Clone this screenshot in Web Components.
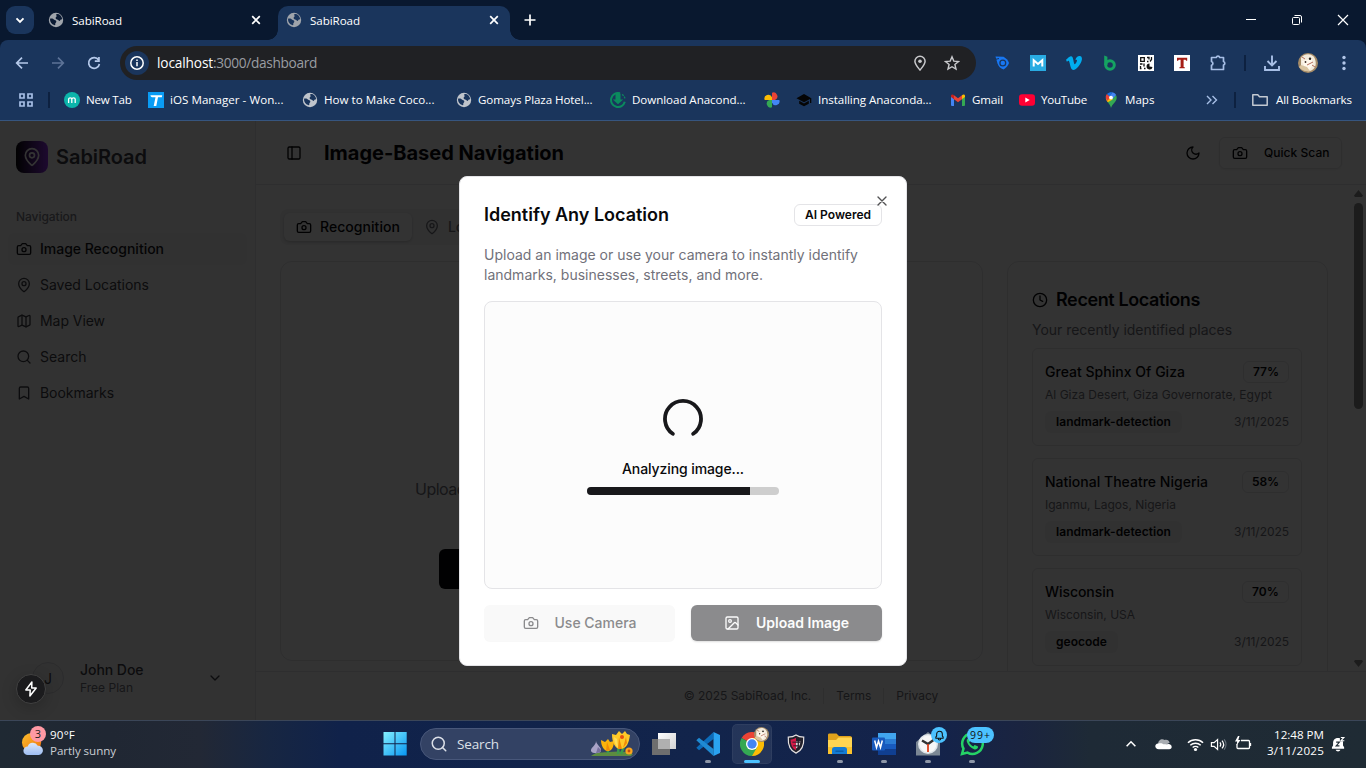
<!DOCTYPE html>
<html lang="en">
<head>
<meta charset="utf-8">
<title>SabiRoad</title>
<style>
html,body{margin:0;height:100%;overflow:hidden;background:#09182f}
body{font-family:"Open Sans","Noto Sans",sans-serif}
</style>
</head>
<body>
<desktop-screen></desktop-screen>
<script>
const L = 'fill="none" stroke="currentColor" stroke-width="2" stroke-linecap="round" stroke-linejoin="round"';
/* name: [viewBox, markup] */
const ICONS = {
  camera: ['0 0 24 24', `<g ${L}><path d="M14.5 4h-5L7 7H4a2 2 0 0 0-2 2v9a2 2 0 0 0 2 2h16a2 2 0 0 0 2-2V9a2 2 0 0 0-2-2h-3l-2.5-3z"/><circle cx="12" cy="13" r="3"/></g>`],
  pin: ['0 0 24 24', `<g ${L}><path d="M20 10c0 4.993-5.539 10.193-7.399 11.799a1 1 0 0 1-1.202 0C9.539 20.193 4 14.993 4 10a8 8 0 0 1 16 0"/><circle cx="12" cy="10" r="3"/></g>`],
  map: ['0 0 24 24', `<g ${L}><path d="M14.106 5.553a2 2 0 0 0 1.788 0l3.659-1.83A1 1 0 0 1 21 4.619v12.764a1 1 0 0 1-.553.894l-4.553 2.277a2 2 0 0 1-1.788 0l-4.212-2.106a2 2 0 0 0-1.788 0l-3.659 1.83A1 1 0 0 1 3 19.381V6.618a1 1 0 0 1 .553-.894l4.553-2.277a2 2 0 0 1 1.788 0z"/><path d="M15 5.764v15M9 3.236v15"/></g>`],
  search: ['0 0 24 24', `<g ${L}><circle cx="11" cy="11" r="8"/><path d="m21 21-4.3-4.3"/></g>`],
  bookmark: ['0 0 24 24', `<path ${L} d="m19 21-7-4-7 4V5a2 2 0 0 1 2-2h10a2 2 0 0 1 2 2v16z"/>`],
  panel: ['0 0 24 24', `<g ${L}><rect x="3" y="3" width="18" height="18" rx="2"/><path d="M9 3v18"/></g>`],
  moon: ['0 0 24 24', `<path ${L} d="M12 3a6 6 0 0 0 9 9 9 9 0 1 1-9-9Z"/>`],
  clock: ['0 0 24 24', `<g ${L}><circle cx="12" cy="12" r="10"/><path d="M12 6v6l4 2"/></g>`],
  image: ['0 0 24 24', `<g ${L}><rect x="3" y="3" width="18" height="18" rx="2"/><circle cx="9" cy="9" r="2"/><path d="m21 15-3.086-3.086a2 2 0 0 0-2.828 0L6 21"/></g>`],
  down: ['0 0 24 24', `<path ${L} d="m6 9 6 6 6-6"/>`],
  close: ['0 0 24 24', `<path ${L} d="M18 6 6 18M6 6l12 12"/>`],
  spinner: ['0 0 40 40', `<path fill="none" stroke="#18181b" stroke-width="3.8" stroke-linecap="round" d="M9.800 34.800A18 18 0 1 1 30.200 34.800"/>`],
  bolt: ['0 0 16 16', `<path fill="none" stroke="currentColor" stroke-width="1.5" stroke-linejoin="round" d="M8.9 1 2.8 9h4.4l-.3 6 6.3-8H8.7z"/>`],
  /* browser chrome */
  caret: ['0 0 16 16', `<path d="M4.5 6.3 8 9.8l3.500-3.500" fill="none" stroke="currentColor" stroke-width="1.900"/>`],
  globe: ['0 0 16 16', `<circle cx="8" cy="8" r="7.200" fill="var(--globe,#bfc4cb)"/><path fill="var(--hole)" d="M2 6.800c1.500-.8 3.200-.3 4 .7.700 1 2 .6 2.300 1.700.4 1.300-1.400 1.600-1 3 .1.700-.5 1.100-1.100.9C3.600 12.300 1.800 9.800 2 6.800zM8.300 2.200c.6-.4 1.700-.3 2.500.1 1.800.9 3.100 2.700 3.300 4.700-.8.9-1.500.3-1.900 1.200-.3 1-1.200.9-1.700.1-.6-.9-2.500-.6-2.900-2-.3-1 .9-1 1-2 .1-.8-.7-1.500-.3-2.100z"/>`],
  x: ['0 0 16 16', `<path d="M4.200 4.200l7.600 7.600M11.800 4.200l-7.600 7.600" stroke="currentColor" stroke-width="1.700"/>`],
  plus: ['0 0 16 16', `<path d="M8 2.500v11M2.500 8h11" stroke="currentColor" stroke-width="1.700"/>`],
  min: ['0 0 16 16', `<path d="M3 7.500h10" stroke="currentColor"/>`],
  restore: ['0 0 16 16', `<rect x="3.500" y="5.500" width="7" height="7" rx="1" fill="none" stroke="currentColor"/><path d="M5.500 3.500H11a1.500 1.500 0 0 1 1.500 1.500v5.500" fill="none" stroke="currentColor"/>`],
  wclose: ['0 0 16 16', `<path d="M3 3l10 10M13 3L3 13" stroke="currentColor" stroke-width="1.200"/>`],
  back: ['0 0 16 16', `<path d="M14 8H3M8 2.700 2.700 8 8 13.300" fill="none" stroke="currentColor" stroke-width="1.700"/>`],
  fwd: ['0 0 16 16', `<path d="M2 8h11M8 2.700 13.300 8 8 13.300" fill="none" stroke="currentColor" stroke-width="1.700"/>`],
  reload: ['0 0 16 16', `<path d="M12.600 5A5.400 5.400 0 1 0 13.400 9" fill="none" stroke="currentColor" stroke-width="1.700"/><path d="M13.800 2v5H8.800V5.300h3.300V2z" fill="currentColor"/>`],
  info: ['0 0 16 16', `<circle cx="8" cy="8" r="6.200" fill="none" stroke="currentColor" stroke-width="1.500"/><path d="M8 7v4.300M8 4.500V6" stroke="currentColor" stroke-width="1.500"/>`],
  place: ['0 0 16 16', `<path d="M8 15C5.500 12 2.900 9.400 2.900 6.300a5.100 5.100 0 0 1 10.200 0C13.100 9.400 10.500 12 8 15z" fill="none" stroke="currentColor" stroke-width="1.500"/><circle cx="8" cy="6.200" r="1.800" fill="currentColor"/>`],
  star: ['0 0 16 16', `<path d="M8 1.800l1.800 4.300 4.700.4-3.600 3 1.100 4.600L8 11.700l-4 2.400 1.100-4.600-3.600-3 4.700-.4z" fill="none" stroke="currentColor" stroke-width="1.400"/>`],
  tag: ['0 0 16 16', `<path d="M1.500 1.500l8 .3c2.500 1.300 4.500 3.500 5.500 6.200-1 2.700-3 5-5.500 6.500-3-1-5-3-6-6z" fill="#1877f2"/><circle cx="8.800" cy="8" r="2.900" fill="none" stroke="#1a355c" stroke-width="1.300"/><path d="M1 4.500l4-1" stroke="#1a355c"/>`],
  mext: ['0 0 16 16', `<path fill="#29abe2" d="M0 0h16v16H0z"/><path d="M3.700 11.600V5.300L8 9l4.300-3.700v6.300" fill="none" stroke="#fff" stroke-width="2"/>`],
  vimeo: ['0 0 16 16', `<path fill="#00adef" d="M0 4.700C1.600 3.300 3.300 1.300 4.800 1.200c1.700-.1 2.100 1.500 2.500 3.600.4 2.400.9 4.500 1.500 4.500.7 0 2.200-2.600 2.200-3.700 0-1-.8-1.100-1.700-.7C10.100 2.200 11.700.9 13.700 1c1.700.1 2.400 1.400 2.200 3.400C15.600 8 10.400 15 7.300 15c-2 0-2.400-2.200-3.200-5-.5-1.900-.8-4.300-1.500-4.300-.4 0-1.100.5-1.700 1z"/>`],
  bext: ['0 0 16 16', `<circle cx="8" cy="10" r="4.300" fill="none" stroke="#15a362" stroke-width="3"/><path d="M2.200.4l3.200 1.300V10H2.200z" fill="#15a362"/>`],
  qr: ['0 0 16 16', `<path fill="#fff" d="M0 0h16v16H0z"/><g fill="none" stroke="#111" stroke-width="1.300"><path d="M2.700 2.700h3.600v3.600H2.700zM9 2.500h2v2M13.500 2v2.500l-1.500 2M9 6.500h1.500M2 9h2.500M6 8.500v3M2.500 11v2.500h1M6 13.500h1.500"/></g><path fill="#111" d="M11.500 8.500a3 3 0 1 0 3 3.500l-3-.5z"/>`],
  text: ['0 0 16 16', `<path fill="#fff" d="M0 0h16v16H0z"/><path fill="#a51d15" d="M3 2.800h10.200v3h-1l-.7-1H9.600v7.200l1.200.3v.9H5.400v-.9l1.200-.3V4.800H4.800l-.8 1H3z"/>`],
  puzzle: ['0 0 18 18', `<path d="M2.500 3.500h4.700a1.900 1.900 0 0 1 3.600 0h3.700v4a1.900 1.900 0 0 1 0 3.600v4.400H2.500v-4.200a2 2 0 0 0 0-3.800z" fill="none" stroke="#a7bfe6" stroke-width="1.700" stroke-linejoin="round"/>`],
  download: ['0 0 18 18', `<path d="M9 1.500v9.500M4.500 7 9 11.500 13.500 7M2 12v4h14v-4" fill="none" stroke="#a7bfe6" stroke-width="1.900"/>`],
  avatar: ['0 0 20 20', `<circle cx="10" cy="10" r="10" fill="#a58b67"/><path d="M3 5c3-5 12-5 14 1 2 6 0 10-5 12-4 1-9-2-9-6z" fill="#f3ebdc"/><path d="M4 8l3 7 4 2 4-5-1-6z" fill="#fff8ec"/><path d="M1 14c3 4 7 5 11 4l-3-4-6-2z" fill="#d9c4a0"/><circle cx="12" cy="5.800" r="1.200" fill="#2d251f"/><circle cx="7.500" cy="9" r=".9" fill="#41312b"/><path d="M9 12l6-3M4 4l3 2M14 12l3 2" stroke="#b36e5c" stroke-width="1" fill="none"/>`],
  dots: ['0 0 16 16', `<g fill="#b2c6e8"><circle cx="8" cy="2.500" r="1.700"/><circle cx="8" cy="8" r="1.700"/><circle cx="8" cy="13.500" r="1.700"/></g>`],
  apps: ['0 0 16 16', `<g fill="none" stroke="#a7bfe6" stroke-width="1.700"><path d="M2 2h4v4H2zM10 2h4v4h-4zM2 10h4v4H2zM10 10h4v4h-4z"/></g>`],
  mteal: ['0 0 16 16', `<circle cx="8" cy="8" r="8" fill="#0cb5ab"/><path d="M4.600 11V7.300c0-2 3.200-2 3.200 0V11M7.800 7.300c0-2 3.400-2 3.400 0V11" fill="none" stroke="#fff" stroke-width="1.300"/>`],
  tblue: ['0 0 16 16', `<path fill="#0a9cf5" d="M0 0h16v16H0z"/><path d="M2.500 3.200h11.700l-.4 2H10L8.300 14H5.700l1.800-8.800H4.200C3 5.200 2.500 4 2.500 3.200z" fill="#fff"/>`],
  anaconda: ['0 0 16 16', `<path d="M10 1.300a7 7 0 1 0 4.800 8.500" fill="none" stroke="#0b8a5e" stroke-width="2"/><path d="M5.500 1.500h5v6h2.700L8 12.200 2.800 7.500h2.700z" fill="#0b8a5e"/><path d="M12 2.500c2 1 3 3 3 5" fill="none" stroke="#0b8a5e" stroke-width="1.300" stroke-dasharray="2 1"/>`],
  photos: ['0 0 16 16', `<path fill="#ea4335" d="M8 8V.8a3.700 3.700 0 0 1 3 7.200z"/><path fill="#4285f4" d="M8 8h7.300a3.700 3.700 0 0 1-7.300 2.500z"/><path fill="#34a853" d="M8 8v7.300A3.700 3.700 0 0 1 5.300 8z"/><path fill="#fbbc04" d="M8 8H.7A3.700 3.700 0 0 1 8 5.300z"/>`],
  cap: ['0 0 16 16', `<path fill="#050505" d="M8 2 .5 6.200 8 10.300l6-3.300v4h1.300V6.200zM3.200 8.800v3L8 14.300l4.800-2.500v-3L8 11.500z"/>`],
  gmail: ['0 0 16 16', `<path fill="#4285f4" d="M1 4.500l3 2.300V14H2a1 1 0 0 1-1-1z"/><path fill="#34a853" d="M15 4.500l-3 2.300V14h2a1 1 0 0 0 1-1z"/><path fill="#ea4335" d="M4 3.300l4 3 4-3v3.900l-4 3-4-3z"/><path fill="#c5221f" d="M1 3.900C1 2.300 2.800 1.900 4 3.300v3.900L1 5z"/><path fill="#fbbc04" d="M15 3.900c0-1.600-1.800-2-3-.6v3.900L15 5z"/>`],
  youtube: ['0 0 16 16', `<rect y="2.300" width="16" height="11.500" rx="3" fill="#ff0033"/><path fill="#fff" d="M6.300 5.500v5l4.400-2.500z"/>`],
  gmaps: ['0 0 16 16', `<path fill="#34a853" d="M8 16c-.5-2.500-2-4-3.200-5.700L13 3c1.500 3 .4 5.200-1.200 7.200C10 12.300 8.700 13.500 8 16z"/><path fill="#fbbc04" d="M4.800 10.300C3.600 8.700 2.900 7.500 2.800 6l6-2.800 1 4.300z"/><path fill="#ea4335" d="M2.800 6C2.500 4 3 3 4 2l4 3.300L4 9z"/><path fill="#1a73e8" d="M4 2c1.600-1.700 3.500-2 5.500-1.700L6.600 4.600z"/><path fill="#4285f4" d="M9.500.3c1.600.4 2.900 1.400 3.600 2.800L9 7.500 6.600 4.600z"/><circle cx="8" cy="5.600" r="1.900" fill="#fff"/>`],
  more: ['0 0 16 16', `<path d="M3 4l4 4-4 4M8.500 4l4 4-4 4" fill="none" stroke="#a7bfe6" stroke-width="1.400"/>`],
  folder: ['0 0 16 16', `<path d="M.8 13.200V2.800h5l1.700 1.900h7.700v8.500z" fill="none" stroke="#c3c9d2" stroke-width="1.500" stroke-linejoin="round"/>`],
  /* taskbar */
  weather: ['0 0 24 24', `<defs><linearGradient id="s" x2="1" y2="1"><stop stop-color="#fbc02d"/><stop offset="1" stop-color="#f0700f"/></linearGradient><linearGradient id="c" x2="0" y2="1"><stop stop-color="#dbe7fb"/><stop offset="1" stop-color="#9dbdf2"/></linearGradient></defs><circle cx="11" cy="10" r="10" fill="url(#s)"/><path fill="url(#c)" d="M7 23a4.500 4.500 0 0 1 0-9 5.800 5.800 0 0 1 10.500-.7A4.800 4.800 0 0 1 18.500 23z"/>`],
  start: ['0 0 24 24', `<defs><linearGradient id="w" x2="1" y2="1"><stop stop-color="#84f0ff"/><stop offset="1" stop-color="#0796f2"/></linearGradient></defs><path fill="url(#w)" d="M.5 0h11v11.300H.5zM12.500 0h11.200v11.300H12.500zM.5 12.300h11v11.300H.5zM12.500 12.300h11.200v11.300H12.500z"/>`],
  flowers: ['0 0 44 26', `<path fill="#5d8c40" d="M1 25c6-5 12-3 18-4 8-1 18-1 24 2l-2 2z"/><path d="M18 22l-1-10M28 23l1-12M31 23c2-4 3-8 3-11" stroke="#3b9a4c" stroke-width="2.500" fill="none"/><path fill="#a9a3c7" d="M6 10c1 5 6 6 5 10-1 3-9 3-10 0-.5-4 5-5 5-10z"/><path fill="#776f9e" d="M6 12v10M6 22c3 0 5-1 5-3l-3-3z"/><path fill="#fbb30c" d="M11 9l4 2 3-3 2 3 4-1c0 5-2 10-6 10s-7-5-7-11z"/><path fill="#ffc928" d="M22 3l4 1 3-4 3 3 3-3 2 3 3 1c-1 7-3 14-10 14-5 0-8-7-8-15z"/><path fill="#f08b08" d="M28 18l1-12 3 12zM33 17l3-11 1 6zM16 20l1-9 3 8z"/><path fill="#ffdc58" d="M24 6c0 5 2 9 4 11l-1-9z"/><circle cx="32" cy="6" r="2" fill="#e85010"/><circle cx="39" cy="20" r="3.600" fill="#f9a51e"/><circle cx="39" cy="20" r="1.400" fill="#c84f10"/>`],
  taskview: ['0 0 24 24', `<defs><linearGradient id="t" x2="1" y2="1"><stop stop-color="#fff"/><stop offset="1" stop-color="#d2d2d2"/></linearGradient></defs><path fill="url(#t)" d="M6 1h18v16H6z"/><path fill="#6e6e6e" d="M0 7h18v16H0z"/><path fill="#b0b0b0" d="M6 7h12v10H6z"/>`],
  vscode: ['0 0 24 24', `<path fill="#0c6cba" d="M.3 15.800 17.500 0v7L3 18.300z"/><path fill="#1f8ad2" d="M.3 8.200 3 5.700 17.500 17v7z"/><path fill="#2aa3f1" d="M17.500 0 24 3.100v17.800L17.500 24z"/>`],
  chrome: ['0 0 24 24', `<path fill="#ea4335" d="M12 12 1.600 6A12 12 0 0 1 22.400 6z"/><path fill="#fbbc05" d="M12 12V6h10.400A12 12 0 0 1 12 24z"/><path fill="#34a853" d="M1.600 6A12 12 0 0 0 12 24l5.200-9-5.200-3z"/><circle cx="12" cy="12" r="6" fill="#fff"/><circle cx="12" cy="12" r="4.700" fill="#4285f4"/>`],
  shield: ['0 0 20 22', `<path fill="#23212b" stroke="#e6e3e4" stroke-width="1.300" d="M10 1c3 2 5 2.300 8.500 2.500C19 12 17 18 10 21 3 18 1 12 1.500 3.500 5 3.300 7 3 10 1z"/><path fill="#d51b48" d="M10 4v14C6 16 4 12 4 6c2 0 4-.8 6-2z"/><path fill="#d8d5d9" d="M10 8h5l-1 5-4 3z"/><path d="M10 9h5M10 13h4M12.500 5v12" stroke="#241e29" stroke-width="1.300"/><path d="M6 9h4M7 13h3" stroke="#241e29"/>`],
  files: ['0 0 24 24', `<path fill="#e0a21b" d="M0 3c0-1 .5-1.500 1.500-1.500h7L11 4h11c1 0 2 .8 2 2v6H0z"/><path fill="#ffd552" d="M0 8h8l2.500-2.500H24V22H0z"/><path fill="#fac22d" d="M0 15h24v7H0z"/><path fill="#137bd4" d="M4 22v-4.500C4 16 5 15 6.500 15h10c1.500 0 2.500 1 2.500 2.500V22z"/><path fill="#0b5da8" d="M7.500 18.500h8V20h-8z"/>`],
  word: ['0 0 24 24', `<path fill="#41a5ee" d="M6 1h18v6H6z"/><path fill="#2b7cd3" d="M6 7h18v5H6z"/><path fill="#185abd" d="M6 12h18v5H6z"/><path fill="#103f91" d="M6 17h18v6H6z"/><rect y="5.500" width="13" height="13" rx="1" fill="#185abd"/><path d="M2.700 8.500l1.800 7L6.500 9l2 6.500 1.800-7" fill="none" stroke="#fff" stroke-width="1.500"/>`],
  alarm: ['0 0 24 24', `<path fill="#7b8794" d="M0 10 12 0l12 10v13.500H0z"/><circle cx="12" cy="12" r="10" fill="#dfe5e9"/><circle cx="12" cy="12" r="8.500" fill="#f7f7f7"/><path d="M6 8.500l6 3.500 5.500-4" fill="none" stroke="#333" stroke-width="2.400"/><path d="M12 12v8" stroke="#df421b" stroke-width="1.800"/>`],
  whatsapp: ['0 0 24 24', `<path fill="none" stroke="#25d366" stroke-width="2.500" d="M2 22l1.500-5.400A10.300 10.300 0 1 1 7.500 20.600z"/><path fill="#25d366" d="M8.300 6.200c-1.500.6-2 2.400-1.300 4 1.300 3.200 3.800 5.800 7 7 1.800.6 3.600-.2 4-1.900.1-.6 0-.8-.4-1l-2.400-1.100c-.4-.2-.7 0-1 .3l-.8 1c-2-.8-3.300-2.200-4.200-4l.9-1.200c.2-.3.2-.6.100-.9l-.9-2.100z"/>`],
  bell: ['0 0 16 16', `<path d="M3.500 11.500V10l1-1.500V6.300a3.500 3.500 0 0 1 7 0v2.200l1 1.500v1.500zM6.500 12a1.500 1.500 0 0 0 3 0" fill="none" stroke="#111" stroke-width="1.300" stroke-linejoin="round"/>`],
  up: ['0 0 16 16', `<path d="M3 10.500l5-5 5 5" fill="none" stroke="#fff" stroke-width="1.800"/>`],
  cloud: ['0 0 18 14' , `<path fill="#a9adb2" d="M3.500 7C3 3.500 7 .7 10.200 2.800 12.500 1.700 15 3.200 15.500 5.700L9 9z"/><path fill="#fff" d="M4 12.500c-4.500 0-5-5.700-.8-6C6 5.500 8 6.500 9 7.200l4 .1C18 6 19.500 12.500 15 12.500z"/>`],
  wifi: ['0 0 18 16', `<g fill="none" stroke="#fff" stroke-width="1.500"><path d="M1 6.200a11.500 11.500 0 0 1 16 0M3.500 8.800a8 8 0 0 1 11 0M6 11.300a4.300 4.300 0 0 1 6 0"/></g><circle cx="9" cy="13.300" r="1.700" fill="#fff"/>`],
  sound: ['0 0 18 16', `<g fill="none" stroke="#fff" stroke-width="1.300"><path d="M1.500 6h2.800L8 2.800v10.400L4.300 10H1.500zM10.500 5.800a3.500 3.500 0 0 1 0 4.400M12.700 3.800a6.500 6.500 0 0 1 0 8.400"/><path d="M15 2.500a9 9 0 0 1 0 11" stroke="#66717b"/></g>`],
  battery: ['0 0 18 16', `<path d="M7 4.500h7.500a1 1 0 0 1 1 1v6a1 1 0 0 1-1 1H4a1 1 0 0 1-1-1V8M16.500 7v3" fill="none" stroke="#fff" stroke-width="1.300"/><path fill="#fff" d="M4 0 1 5.500h2.200L2.500 9.500 6.500 4H4.300L5.500 0z"/>`],
  dnd: ['0 0 16 18', `<path fill="#fff" d="M1 13.500V12l1.200-2V7.500C2.200 4 4.500 2 7.500 2c1 0 1.500.2 2 .4v3h3.300V10L14 12v1.500zM5 14.700h5c-.7 2.200-4.300 2.200-5 0z"/><path d="M5.500 6.500h3.500L5.500 10.500H9" fill="none" stroke="#1f2b34" stroke-width="1.200"/><path d="M10.500 1.500h3.200l-3 3.500h3.500" fill="none" stroke="#fff" stroke-width="1.200"/>`]
};

class Base extends HTMLElement {
  constructor() {
    super();
    this.attachShadow({mode: 'open'});
  }
  connectedCallback() {
    if (!this.done) {
      this.done = true;
      this.shadowRoot.innerHTML = `<style>*{box-sizing:border-box}</style>` + this.view();
      this.ready();
    }
  }
  a(n, d = '') { return this.getAttribute(n) ?? d; }
  ready() {}
}
const define = (name, view, ready) => customElements.define(name, class extends Base {
  view() { return view.call(this); }
  ready() { ready && ready.call(this); }
});

define('ui-icon', function () {
  const [vb, body] = ICONS[this.a('name')];
  const w = this.a('size', '16'), h = this.a('h', w);
  return `<style>:host{display:block;flex:none;width:${w}px;height:${h}px}svg{display:block;width:100%;height:100%}</style><svg viewBox="${vb}">${body}</svg>`;
});

/* A single line of text tracked so that it fills the width given in "w". */
define('ui-label', function () {
  return `<style>:host{display:block;flex:none;white-space:nowrap}span{display:inline-block}</style><span><slot></slot></span>`;
}, function () {
  const w = parseFloat(this.a('w', '0'));
  if (!w) return;
  const nat = this.shadowRoot.querySelector('span').getBoundingClientRect().width;
  this.style.letterSpacing = ((w - nat) / this.textContent.length).toFixed(3) + 'px';
  this.style.width = w + 'px';
});

define('browser-tab', function () {
  return `<style>:host{display:flex;align-items:center;height:34px;width:232px;padding:0 8px 6px;position:relative;color:#fff;font-size:11.6px;--hole:#0a1a33;--globe:#9fa4ab;border-radius:10px 10px 0 0}
  :host([active]){background:#1a355c;--hole:#1a355c}
  :host([active])::before,:host([active])::after{content:"";position:absolute;bottom:0;width:10px;height:10px}
  :host([active])::before{left:-10px;background:radial-gradient(circle at 0 0,transparent 9.500px,#1a355c 10px)}
  :host([active])::after{right:-10px;background:radial-gradient(circle at 100% 0,transparent 9.500px,#1a355c 10px)}
  ui-label{margin-left:8px;flex:1}.x{margin-left:auto}</style>
  <ui-icon name="globe"></ui-icon><ui-label w="50">${this.a('label')}</ui-label><ui-icon class="x" name="x"></ui-icon>`;
});

define('tab-strip', function () {
  return `<style>:host{display:flex;height:40px;padding:6px 0 0 6px;background:#09182f;color:#fff;box-sizing:border-box}
  .menu{width:28px;height:28px;border-radius:9px;background:#1a355c;display:grid;place-items:center;margin-right:6px}
  browser-tab{box-sizing:border-box}browser-tab+browser-tab{margin-left:6px}
  .plus{margin:6px 0 0 12px}.win{margin-left:auto;display:flex;gap:30px;padding:6px 15px 0 0}</style>
  <div class="menu"><ui-icon name="caret"></ui-icon></div>
  <browser-tab label="SabiRoad"></browser-tab><browser-tab label="SabiRoad" active></browser-tab>
  <ui-icon class="plus" name="plus"></ui-icon>
  <div class="win"><ui-icon name="min"></ui-icon><ui-icon name="restore"></ui-icon><ui-icon name="wclose"></ui-icon></div>`;
});

define('address-bar', function () {
  return `<style>:host{display:flex;align-items:center;height:46px;padding-left:4px}
  .s{width:36px;display:grid;place-items:center;color:#b5c9ea;flex:none}.dim{color:#5d7397}
  .box{width:856px;height:34px;border-radius:17px;background:#202124;display:flex;align-items:center;padding:0 16px 0 5px;margin:0 8px 0 8px;color:#c9cacd;font-size:13.700px}
  .i{width:24px;height:24px;border-radius:50%;background:#1a355c;color:#fff;display:grid;place-items:center;margin-right:8px}
  .box ui-label{margin-top:-1px}.h{color:#fff}.p{color:#9a9da2}.r{display:flex;gap:16px;margin-left:auto}
  .sep{width:2px;height:16px;background:#0d2140;margin:0 8px}</style>
  <div class="s"><ui-icon name="back"></ui-icon></div><div class="s dim"><ui-icon name="fwd"></ui-icon></div><div class="s"><ui-icon name="reload"></ui-icon></div>
  <div class="box"><div class="i"><ui-icon name="info"></ui-icon></div><ui-label class="h" w="56">localhost</ui-label><ui-label class="p" w="104">:3000/dashboard</ui-label>
  <div class="r"><ui-icon name="place"></ui-icon><ui-icon name="star"></ui-icon></div></div>
  ${['tag','mext','vimeo','bext','qr','text'].map(n => `<div class="s"><ui-icon name="${n}"></ui-icon></div>`).join('')}
  <div class="s"><ui-icon name="puzzle" size="18"></ui-icon></div><div class="sep"></div>
  <div class="s"><ui-icon name="download" size="18"></ui-icon></div><div class="s"><ui-icon name="avatar" size="20"></ui-icon></div><div class="s"><ui-icon name="dots"></ui-icon></div>`;
});

define('bookmark-item', function () {
  return `<style>:host{display:flex;align-items:center;flex:none;gap:${this.a('gap','6')}px;width:${this.a('slotw')}px;font-size:11.600px;color:#fff;--hole:#1a355c}ui-label{margin-top:-2px}</style>
  <ui-icon name="${this.a('icon')}"></ui-icon>${this.a('label') ? `<ui-label w="${this.a('w')}">${this.a('label')}</ui-label>` : ''}`;
});

define('bookmark-bar', function () {
  const b = [['mteal',84,'New Tab',45.5],['tblue',154,'iOS Manager - Won...',113.5],['globe',154,'How to Make Coco...',110.5],['globe',154,'Gomays Plaza Hotel...',114.5],['anaconda',154,'Download Anacond...',113.5],['photos',32,'',0],['cap',154,'Installing Anaconda...',113.5],['gmail',69,'Gmail',31],['youtube',84,'YouTube',46],['gmaps',101,'Maps',29.5]];
  return `<style>:host{display:flex;align-items:center;height:34px;padding:0 0 6px 18px}.sep{width:2px;height:16px;background:#0d2140;flex:none}.m{margin-right:14px;}</style>
  <ui-icon name="apps"></ui-icon><div class="sep" style="margin:0 14px"></div>
  ${b.map(([i, s, l, w]) => `<bookmark-item icon="${i}" slotw="${s}" label="${l}" w="${w}"></bookmark-item>`).join('')}
  <ui-icon class="m" name="more"></ui-icon><div class="sep" style="margin-right:16px"></div>
  <bookmark-item icon="folder" slotw="112" gap="8" label="All Bookmarks" w="76"></bookmark-item>`;
});

define('nav-item', function () {
  return `<style>:host{display:flex;align-items:center;height:32px;gap:8px;padding:0 8px;border-radius:6px;font-size:14px;line-height:20px;color:#3f3f46}:host([active]){background:#f4f4f5;color:#18181b;font-weight:500}</style>
  <ui-icon name="${this.a('icon')}"></ui-icon><ui-label w="${this.a('w')}">${this.a('label')}</ui-label>`;
});

define('app-sidebar', function () {
  return `<style>:host{display:flex;flex-direction:column;width:256px;background:#fafafa;border-right:1px solid #e5e7eb;padding:20px 8px 24px;color:#3f3f46;box-sizing:border-box}
  .brand{display:flex;align-items:center;gap:8px;padding-left:8px;font-size:20px;font-weight:600}
  .logo{width:32px;height:32px;border-radius:8px;background:linear-gradient(90deg,#09090b,#9333ea);display:grid;place-items:center;color:#fff}
  .cap{font-size:12px;line-height:16px;padding:36px 0 8px 8px;color:#7c7c85;font-weight:500}
  nav{display:grid;gap:4px}.user{margin-top:auto;display:flex;align-items:center;padding-left:24px}
  .av{width:32px;height:32px;border-radius:50%;background:#f4f4f5;border:1px solid #d9d9de;display:grid;place-items:center;font-size:14px;margin-right:16px}
  .n{font-size:14px;line-height:20px;font-weight:500}.f{font-size:12px;line-height:16px;color:#71717a}.c{margin-left:auto;margin-right:24px}</style>
  <div class="brand"><div class="logo"><ui-icon name="pin" size="20"></ui-icon></div><ui-label w="91">SabiRoad</ui-label></div>
  <div class="cap"><ui-label w="61">Navigation</ui-label></div>
  <nav><nav-item active icon="camera" label="Image Recognition" w="124"></nav-item><nav-item icon="pin" label="Saved Locations" w="109"></nav-item><nav-item icon="map" label="Map View" w="65"></nav-item><nav-item icon="search" label="Search" w="46.500"></nav-item><nav-item icon="bookmark" label="Bookmarks" w="74"></nav-item></nav>
  <div class="user"><div class="av">J</div><div><ui-label class="n" w="63.500">John Doe</ui-label><ui-label class="f" w="53">Free Plan</ui-label></div><ui-icon class="c" name="down"></ui-icon></div>`;
});

define('location-card', function () {
  return `<style>:host{display:block;box-sizing:border-box;height:98px;border:1px solid #e4e4e7;border-radius:6px;padding:12px;color:#09090b}
  .r{display:flex;justify-content:space-between;align-items:center;height:22px}.t{font-size:14px;line-height:20px;font-weight:500}
  .s{font-size:12px;line-height:16px;color:#71717a;margin:4px 0 8px}.d{font-size:12px;line-height:16px;color:#71717a}
  .b{height:22px;border:1px solid #e4e4e7;border-radius:6px;padding:0 9px;font-size:12px;font-weight:600;line-height:20px}.g{background:#f4f4f5;border-color:transparent;padding:0 10px}</style>
  <div class="r"><ui-label class="t" w="${this.a('tw')}">${this.a('name')}</ui-label><div class="b"><ui-label w="${this.a('pw')}">${this.a('pct')}</ui-label></div></div>
  <ui-label class="s" w="${this.a('sw')}">${this.a('place')}</ui-label>
  <div class="r"><div class="b g"><ui-label w="${this.a('kw')}">${this.a('kind')}</ui-label></div><ui-label class="d" w="55">3/11/2025</ui-label></div>`;
});

define('app-main', function () {
  return `<style>:host{display:flex;flex-direction:column;flex:1;min-width:0;background:#fff;color:#09090b}
  header{height:64px;flex:none;border-bottom:1px solid #e5e7eb;display:flex;align-items:center;padding:0 24px 0 30px}
  .title{font-size:20px;font-weight:700;margin-left:22px}.moon{margin-left:auto;margin-right:18px}
  .q{width:123px;height:32px;border:1px solid #e4e4e7;border-radius:6px;display:flex;align-items:center;padding-left:12px;gap:16px;font-size:12px;font-weight:500;box-shadow:0 1px 2px #0001}
  .body{flex:1;min-height:0;overflow:hidden;display:flex;padding-left:24px}
  .content{width:703px;padding-top:24px;flex:none}
  .tabs{display:flex;width:260px;height:36px;background:#f4f4f5;border-radius:8px;padding:4px;font-size:14px;line-height:20px;font-weight:500;color:#71717a}
  .tabs div{display:flex;align-items:center;gap:8px;padding:0 12px}.tabs .on{background:#fff;color:#09090b;border-radius:6px;width:128px;box-shadow:0 1px 3px #0003}
  .card{border:1px solid #e4e4e7;border-radius:12px}
  .drop{height:400px;margin-top:16px;padding:217px 0 0 134px;font-size:16px;color:#71717a}.btn{width:160px;height:40px;margin:50px 0 0 24px;border-radius:6px;background:#09090b}
  .recent{width:321px;flex:none;height:560px;margin:76px 0 0 24px;padding:26px 25px 0 24px;align-self:flex-start}
  .h{display:flex;align-items:center;gap:8px;font-size:18px;font-weight:600;line-height:24px}.sub{font-size:14px;line-height:20px;color:#71717a;margin:8px 0}
  .list{display:grid;gap:12px}.bar{margin-left:auto;width:12px;padding:5px 3px 4px 0;display:flex;flex-direction:column;flex:none}
  .bar i{display:block;width:9px;height:7px;background:#8c8c8c;clip-path:polygon(50% 0,100% 80%,90% 100%,10% 100%,0 80%)}.bar i:last-child{margin-top:auto;transform:scaleY(-1)}
  .thumb{height:206px;width:9px;border-radius:5px;background:#8c8c8c;margin-top:6px}
  footer{height:49px;flex:none;border-top:1px solid #e5e7eb;display:flex;align-items:center;justify-content:center;gap:12px;font-size:12px;line-height:16px;color:#71717a}
  footer hr{width:1px;height:16px;border:0;margin:0;background:#e4e4e7}</style>
  <header><ui-icon name="panel"></ui-icon><ui-label class="title" w="240">Image-Based Navigation</ui-label><ui-icon class="moon" name="moon"></ui-icon><div class="q"><ui-icon name="camera"></ui-icon><ui-label w="65.500">Quick Scan</ui-label></div></header>
  <div class="body"><div class="content">
    <div class="tabs"><div class="on"><ui-icon name="camera"></ui-icon><ui-label w="80">Recognition</ui-label></div><div><ui-icon name="pin"></ui-icon><ui-label w="35">Local</ui-label></div></div>
    <div class="card drop"><ui-label w="120">Upload an image</ui-label><div class="btn"></div></div></div>
    <div class="card recent"><div class="h"><ui-icon name="clock"></ui-icon><ui-label w="144">Recent Locations</ui-label></div><ui-label class="sub" w="200">Your recently identified places</ui-label>
    <div class="list"><location-card name="Great Sphinx Of Giza" tw="140" pct="77%" pw="26" place="Al Giza Desert, Giza Governorate, Egypt" sw="227" kind="landmark-detection" kw="115"></location-card>
    <location-card name="National Theatre Nigeria" tw="163" pct="58%" pw="27" place="Iganmu, Lagos, Nigeria" sw="131" kind="landmark-detection" kw="115"></location-card>
    <location-card name="Wisconsin" tw="69" pct="70%" pw="27" place="Wisconsin, USA" sw="90" kind="geocode" kw="51"></location-card></div></div>
    <div class="bar"><i></i><div class="thumb"></div><i></i></div></div>
  <footer><ui-label w="127.500">© 2025 SabiRoad, Inc.</ui-label><hr><ui-label w="35">Terms</ui-label><hr><ui-label w="42">Privacy</ui-label></footer>`;
});

define('app-dialog', function () {
  return `<style>:host{display:block;box-sizing:border-box;position:relative;width:448px;height:490px;background:#fff;border:1px solid #e4e4e7;border-radius:8px;padding:27px 24px 24px;color:#09090b}
  .x{position:absolute;right:16px;top:16px;opacity:.7}
  .h{display:flex;justify-content:space-between;align-items:center;height:22px}.t{font-size:18px;font-weight:600;line-height:18px}
  .b{height:22px;width:88px;border:1px solid #e4e4e7;border-radius:6px;padding-left:10px;font-size:12px;font-weight:600;line-height:20px}
  .d{font-size:14px;line-height:20px;color:#71717a}.first{margin-top:19px}
  .box{height:288px;margin-top:16px;border:1px solid #e4e4e7;border-radius:8px;background:#fcfcfc;display:flex;flex-direction:column;align-items:center;padding-top:97px}
  .an{font-size:14px;font-weight:500;line-height:20px;margin-top:20px}
  .p{width:192px;height:8px;border-radius:4px;background:#cecece;overflow:hidden;margin-top:8px}.p div{width:85%;height:100%;background:#18181b}
  .f{display:grid;grid-template-columns:1fr 1fr;gap:16px;margin-top:16px}.btn{height:36px;border-radius:6px;display:flex;align-items:center;justify-content:center;gap:16px;font-size:14px;line-height:20px;font-weight:500}
  .u{background:#f9f9f9;color:#8b8b8d;box-shadow:0 1px 1px #00000008}.v{background:#8b8b8d;color:#fcfcfc;font-weight:600;box-shadow:0 1px 2px #0002}</style>
  <div class="h"><ui-label class="t" w="185">Identify Any Location</ui-label><div class="b"><ui-label w="66">AI Powered</ui-label></div></div>
  <ui-label class="d first" w="374">Upload an image or use your camera to instantly identify</ui-label><ui-label class="d" w="279">landmarks, businesses, streets, and more.</ui-label>
  <div class="box"><ui-icon name="spinner" size="40"></ui-icon><ui-label class="an" w="122">Analyzing image...</ui-label><div class="p"><div></div></div></div>
  <div class="f"><div class="btn u"><ui-icon name="camera"></ui-icon><ui-label w="82">Use Camera</ui-label></div><div class="btn v"><ui-icon name="image"></ui-icon><ui-label w="93">Upload Image</ui-label></div></div>
  <ui-icon class="x" name="close"></ui-icon>`;
});

define('app-page', function () {
  return `<style>:host{display:flex;position:relative;height:599px;font-family:Inter,sans-serif;overflow:hidden}
  .shade{position:absolute;inset:0;background:rgba(0,0,0,.8);display:grid;justify-content:center;align-content:start;padding-top:55px}
  .dev{position:absolute;left:16px;bottom:16px;width:30px;height:30px;border-radius:50%;background:#1b1b1d;border:1px solid #414141;color:#fff;display:grid;place-items:center;box-shadow:0 4px 16px #0003}</style>
  <app-sidebar></app-sidebar><app-main></app-main><div class="shade"><app-dialog></app-dialog></div><div class="dev"><ui-icon name="bolt"></ui-icon></div>`;
});

define('task-app', function () {
  return `<style>:host{display:grid;position:relative;width:40px;height:40px;margin:0 2px;place-items:center;flex:none}
  :host([active]){background:#ffffff14;border-radius:5px;box-shadow:inset 0 0 0 1px #ffffff0c}
  .run{position:absolute;bottom:1px;left:17px;width:6px;height:3px;border-radius:2px;background:#8e97a8}:host([active]) .run{left:12px;width:16px;background:#4cc2ff}
  ::slotted(*){position:absolute}</style>
  <ui-icon name="${this.a('icon')}" size="${this.a('size','24')}"></ui-icon>${this.hasAttribute('run') ? '<div class="run"></div>' : ''}<slot></slot>`;
});

define('task-bar', function () {
  return `<style>:host{display:flex;box-sizing:border-box;align-items:center;height:48px;padding-bottom:1px;border-top:1px solid #3b4658;color:#fff;background:linear-gradient(90deg,#1f2933 0,#202733 110px,#222835 200px,#172642 270px,#10224a 340px,#12244b 700px,#14234a 940px,#1a2440 1020px,#1e2a36 1090px,#1f2b34 100%)}
  .wx{position:relative;width:383px;display:flex;padding-left:21px;align-items:center;flex:none;font-size:11.600px;line-height:16px}.wx .t{margin:-2px 0 0 6px}.wx .b{color:#c9cdd3}
  .n{position:absolute;left:30px;top:-3px;width:16px;height:16px;border-radius:50%;background:#ff99a4;color:#222;font-size:11px;line-height:16px;text-align:center}
  .s{width:220px;height:32px;border-radius:16px;background:#334264;border:1px solid #48577a;display:flex;align-items:center;padding:0 5px 0 9px;margin:0 2px 0 13px;color:#dce0e8;font-size:13.500px;flex:none}
  .s ui-label{margin:-1px 0 0 9px}.s .fl{margin-left:auto}
  .av{left:22px;top:3px}.bl{left:23px;top:3px;width:16px;height:16px;border-radius:50%;background:#4cc2ff;display:grid;place-items:center}.ct{left:15px;top:3px;width:27px;height:16px;border-radius:8px;background:#4cc2ff;color:#111;font-size:10.500px;line-height:16px;padding-left:3px}
  .tray{margin-left:auto;display:flex;align-items:center;padding-right:20px;font-size:11.600px;line-height:16px}.cl{display:grid;justify-items:end;margin:-2px 7px 0 15px}</style>
  <div class="wx"><ui-icon name="weather" size="23"></ui-icon><div class="n">3</div><div class="t"><ui-label w="25">90°F</ui-label><ui-label class="b" w="66">Partly sunny</ui-label></div></div>
  <ui-icon name="start" size="24"></ui-icon>
  <div class="s"><ui-icon name="search" size="18"></ui-icon><ui-label w="42">Search</ui-label><ui-icon class="fl" name="flowers" size="44" h="26"></ui-icon></div>
  <task-app icon="taskview"></task-app><task-app icon="vscode" run></task-app>
  <task-app icon="chrome" run active><ui-icon class="av" name="avatar" size="15"></ui-icon></task-app><task-app icon="shield" size="20"></task-app>
  <task-app icon="files" run></task-app><task-app icon="word" run></task-app>
  <task-app icon="alarm" run><div class="bl"><ui-icon name="bell" size="13"></ui-icon></div></task-app>
  <task-app icon="whatsapp" run><div class="ct"><ui-label w="21">99+</ui-label></div></task-app>
  <div class="tray"><ui-icon name="up" size="14" style="margin-right:17px"></ui-icon><ui-icon name="cloud" size="17" h="14" style="margin-right:15px"></ui-icon><ui-icon name="wifi" size="17" style="margin-right:6px"></ui-icon><ui-icon name="sound" size="17" style="margin-right:7px"></ui-icon><ui-icon name="battery" size="18"></ui-icon>
  <div class="cl"><ui-label w="50">12:48 PM</ui-label><ui-label w="57">3/11/2025</ui-label></div><ui-icon name="dnd" size="15" h="17"></ui-icon></div>`;
});

define('desktop-screen', function () {
  return `<style>:host{display:block;width:1366px;height:768px;overflow:hidden}.bars{height:81px;background:#1a355c;border-radius:8px 8px 0 0;border-bottom:1px solid #36557f}</style>
  <tab-strip></tab-strip><div class="bars"><address-bar></address-bar><bookmark-bar></bookmark-bar></div><app-page></app-page><task-bar></task-bar>`;
});
</script>
</body>
</html>
